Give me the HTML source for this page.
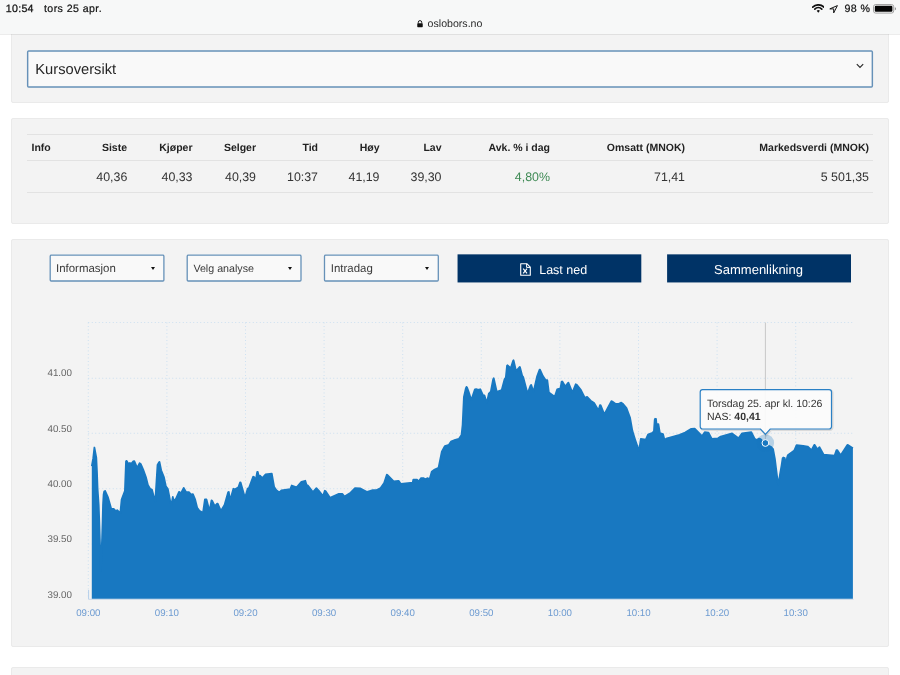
<!DOCTYPE html>
<html lang="no">
<head>
<meta charset="utf-8">
<title>oslobors.no</title>
<style>
*{box-sizing:border-box;margin:0;padding:0}
html,body{width:900px;height:675px;overflow:hidden;background:#fff}
body{position:relative;will-change:transform;text-rendering:geometricPrecision;font-family:"Liberation Sans",sans-serif;color:#333}
.abs{position:absolute}
.card{position:absolute;left:11px;width:878px;background:#f3f3f3;border:1px solid #eaeaea;border-radius:2px}
#status{position:absolute;left:0;top:0;width:900px;height:35px;background:#f7f8f8;background-clip:padding-box;border-bottom:1px solid rgba(0,0,0,0.075);z-index:5}
#status span{position:absolute;color:#111;white-space:nowrap}
.sel{position:absolute;background:#f9f9f9;border:1px solid transparent}
.sel span{position:absolute;white-space:nowrap;color:#3a3a3a}
.tri{position:absolute;width:0;height:0;border-left:2.7px solid transparent;border-right:2.7px solid transparent;border-top:3.1px solid #111}
.btn{position:absolute;top:254px;height:28.3px;color:#fff}
.btn span{position:absolute;white-space:nowrap}
.th{position:absolute;font-weight:bold;font-size:10.5px;color:#222;white-space:nowrap;top:142.2px;line-height:12px}
.td{position:absolute;font-size:12.4px;color:#333;white-space:nowrap;top:169.5px;line-height:14px}
.r{text-align:right}
.hl{position:absolute;left:27px;width:846px;height:1px;background:#e2e2e2}
</style>
</head>
<body>

<!-- iOS status / URL bar -->
<div id="status">
  <span style="left:5.8px;top:2.9px;font-size:10.6px;line-height:13px;letter-spacing:.3px;-webkit-text-stroke:.25px #111">10:54</span>
  <span style="left:44px;top:2.9px;font-size:10.6px;line-height:13px;letter-spacing:.42px;-webkit-text-stroke:.2px #111">tors 25 apr.</span>
  <svg class="abs" style="left:416.5px;top:20.2px" width="6" height="7.9" viewBox="0 0 7 9"><path d="M1.5 4V2.6a2 2 0 0 1 4 0V4" fill="none" stroke="#111" stroke-width="1.1"/><rect x="0.3" y="3.8" width="6.4" height="4.6" rx="0.8" fill="#111"/></svg>
  <span style="left:427.6px;top:18px;font-size:10.6px;line-height:12px;color:#2a2a2a">oslobors.no</span>
  <!-- wifi -->
  <svg class="abs" style="left:811.6px;top:4.2px" width="12.6" height="9" viewBox="0 0 14 10"><path d="M0.8 3.4a9 9 0 0 1 12.4 0" fill="none" stroke="#111" stroke-width="1.9" stroke-linecap="round"/><path d="M3.1 5.7a5.6 5.6 0 0 1 7.8 0" fill="none" stroke="#111" stroke-width="1.9" stroke-linecap="round"/><path d="M5.2 7.6a2.6 2.6 0 0 1 3.6 0L7 9.6z" fill="#111"/></svg>
  <!-- location arrow -->
  <svg class="abs" style="left:828.8px;top:5px" width="9" height="9" viewBox="0 0 9 9"><path d="M8.4 0.6L0.8 3.9h3.9v4z" fill="none" stroke="#111" stroke-width="1" stroke-linejoin="round"/></svg>
  <span style="left:844.5px;top:3.2px;font-size:10.7px;line-height:13px;letter-spacing:.4px;-webkit-text-stroke:.2px #111">98 %</span>
  <!-- battery -->
  <svg class="abs" style="left:873px;top:4px" width="24" height="10" viewBox="0 0 24 10"><rect x="0.5" y="0.5" width="20.2" height="8.6" rx="2.2" fill="none" stroke="#9a9a9a" stroke-width="0.9"/><rect x="1.8" y="1.8" width="17.6" height="6" rx="1.1" fill="#050505"/><path d="M21.9 3.3a1.6 1.6 0 0 1 0 3z" fill="#888"/></svg>
</div>

<!-- card 1 : Kursoversikt select -->
<div class="card" style="top:20px;height:83px"></div>
<div class="sel" style="left:27px;top:50.3px;width:846px;height:37.2px">
  <span style="left:7.3px;top:10.8px;font-size:14.7px;line-height:17px;color:#262626">Kursoversikt</span>
  <svg class="abs" style="left:828px;top:11.3px" width="8" height="6" viewBox="0 0 8 6"><path d="M0.8 1.1L4 4.4L7.2 1.1" fill="none" stroke="#2b2b2b" stroke-width="1.15"/></svg>
</div>

<!-- card 2 : quote table -->
<div class="card" style="top:118px;height:106px"></div>
<div class="hl" style="top:134px"></div>
<div class="hl" style="top:159.6px"></div>
<div class="hl" style="top:191.5px"></div>
<div class="th" style="left:31.5px">Info</div>
<div class="th r" style="right:773px">Siste</div>
<div class="th r" style="right:707.5px">Kjøper</div>
<div class="th r" style="right:644px">Selger</div>
<div class="th r" style="right:582px">Tid</div>
<div class="th r" style="right:520.5px">Høy</div>
<div class="th r" style="right:458.5px">Lav</div>
<div class="th r" style="right:350px">Avk. % i dag</div>
<div class="th r" style="right:215px">Omsatt (MNOK)</div>
<div class="th r" style="right:31px">Markedsverdi (MNOK)</div>
<div class="td r" style="right:772.7px">40,36</div>
<div class="td r" style="right:707.5px">40,33</div>
<div class="td r" style="right:644px">40,39</div>
<div class="td r" style="right:582px">10:37</div>
<div class="td r" style="right:520.5px">41,19</div>
<div class="td r" style="right:458.5px">39,30</div>
<div class="td r" style="right:350px;color:#3f8a55">4,80%</div>
<div class="td r" style="right:215px">71,41</div>
<div class="td r" style="right:31px">5 501,35</div>

<!-- card 3 : chart -->
<div class="card" style="top:239px;height:407.5px"></div>
<div class="sel" style="left:49.5px;top:254.3px;width:114.8px;height:27.2px"><span style="left:5.5px;top:8.2px;font-size:11.45px;line-height:13px">Informasjon</span><i class="tri" style="left:100.4px;top:11.6px"></i></div>
<div class="sel" style="left:186.7px;top:254.3px;width:114.8px;height:27.2px"><span style="left:5.7px;top:8.2px;font-size:10.7px;line-height:13px">Velg analyse</span><i class="tri" style="left:100.4px;top:11.6px"></i></div>
<div class="sel" style="left:324px;top:254.3px;width:114.8px;height:27.2px"><span style="left:5.8px;top:8.2px;font-size:11.45px;line-height:13px">Intradag</span><i class="tri" style="left:100.4px;top:11.6px"></i></div>
<svg class="abs" style="left:0;top:250px" width="900" height="40" viewBox="0 250 900 40"><rect x="457.55" y="254.35" width="183.75" height="28.1" fill="#003366"/><rect x="667.1" y="254.35" width="183.9" height="28.1" fill="#003366"/></svg>
<div class="btn" style="left:457px;width:184.3px">
  <svg class="abs" style="left:63px;top:8.7px" width="11" height="13" viewBox="0 0 11 13"><path d="M0.7 0.7h6.1l3.5 3.5v8.1H0.7z" fill="none" stroke="#fff" stroke-width="1.1" stroke-linejoin="round"/><path d="M6.6 0.9v3.5h3.5" fill="none" stroke="#fff" stroke-width="1"/><path d="M3.2 5.6l3.8 4.8M7 5.6l-3.8 4.8" stroke="#fff" stroke-width="1.15" fill="none"/></svg>
  <span style="left:82.2px;top:9px;font-size:12.5px;line-height:15px">Last ned</span>
</div>
<div class="btn" style="left:667px;width:184px">
  <span style="left:47.1px;top:8px;font-size:13px;line-height:15px">Sammenlikning</span>
</div>

<svg class="abs" style="left:0;top:300px" width="900" height="340" viewBox="0 300 900 340" font-family="Liberation Sans, sans-serif" text-rendering="geometricPrecision">
  <g stroke="#c3dbf0" stroke-width="0.9" stroke-dasharray="0.9 2.6" fill="none">
    <path d="M88.3 322.5H852.5M88.3 378.3H852.5M88.3 433.3H852.5M88.3 488.7H852.5M88.3 544.1H852.5"/>
    <path d="M88.3 322.5V599M166.9 322.5V599M245.5 322.5V599M324.1 322.5V599M402.7 322.5V599M481.3 322.5V599M559.9 322.5V599M638.5 322.5V599M717.1 322.5V599M795.7 322.5V599"/>
  </g>
  <path d="M88.3 599.3H853.5" stroke="#c6d6e8" stroke-width="1" fill="none"/>
  <path d="M88.6 590V599" stroke="#b5cfea" stroke-width="1" fill="none"/>
  <path fill="#1878c1" d="M91.8 598.8 L91.8 466.15 L93.2 458.14 L94.4 447.50 L94.5 447.96 L96.3 457.55 L97.0 472.35 L97.6 488.85 L98.7 504.85 L99.3 521.45 L99.8 537.85 L100.9 570.85 L102.1 537.85 L102.6 521.45 L103.0 504.85 L103.6 494.35 L104.2 491.55 L105.1 490.85 L107.9 497.02 L111.3 508.88 L113.7 508.81 L115.8 511.09 L117.2 510.17 L120.3 513.09 L121.6 499.50 L124.9 490.88 L126.0 461.21 L126.7 460.84 L128.4 463.86 L129.9 462.88 L131.2 463.88 L133.1 461.47 L134.3 461.17 L137.2 467.96 L139.6 463.14 L140.7 463.91 L143.2 469.63 L145.9 476.96 L147.9 485.04 L150.1 488.63 L152.0 489.82 L155.2 502.09 L157.5 464.96 L159.1 462.06 L159.5 461.99 L161.2 470.26 L163.9 476.96 L165.9 486.37 L167.9 489.06 L171.2 506.20 L172.8 496.88 L173.7 500.87 L176.0 498.52 L179.0 491.83 L181.0 493.15 L183.7 487.88 L186.2 492.18 L188.9 492.10 L191.0 494.67 L192.9 494.08 L195.2 499.59 L197.2 507.68 L199.4 510.67 L203.0 512.69 L204.9 499.37 L206.5 499.40 L209.5 511.02 L211.5 500.35 L212.1 500.69 L214.8 506.18 L217.2 503.55 L217.7 503.68 L220.9 510.86 L224.5 505.07 L228.2 492.01 L228.8 491.97 L230.0 500.50 L233.4 488.76 L235.2 489.33 L238.4 487.29 L240.1 482.38 L240.7 482.63 L245.0 497.81 L247.7 488.56 L249.0 487.92 L253.1 476.72 L253.9 476.76 L255.7 480.12 L257.2 471.98 L257.8 472.00 L258.6 475.58 L260.0 475.51 L262.3 477.98 L265.4 474.49 L271.8 473.71 L274.2 487.04 L276.4 490.33 L279.4 492.44 L281.4 490.39 L290.3 489.10 L291.7 485.50 L296.6 487.31 L301.4 481.76 L305.3 480.77 L306.7 485.58 L307.9 485.49 L312.9 492.02 L316.4 488.18 L318.7 490.60 L323.0 496.04 L324.8 490.77 L325.5 491.03 L330.0 497.80 L338.9 493.86 L342.3 493.80 L344.5 496.44 L350.6 492.69 L355.0 488.12 L360.5 488.45 L367.2 491.95 L372.8 490.17 L376.2 490.18 L380.6 487.99 L384.1 483.11 L386.8 474.72 L387.3 474.81 L393.7 481.31 L398.6 480.80 L400.9 483.93 L412.7 482.50 L413.3 479.68 L417.0 479.63 L418.8 481.28 L421.1 478.09 L423.7 478.11 L424.8 479.35 L427.3 478.18 L429.6 479.18 L431.7 471.79 L434.7 469.46 L438.5 467.94 L441.8 451.60 L444.9 445.98 L448.9 444.74 L450.9 441.68 L455.3 439.84 L458.8 438.97 L461.5 435.01 L462.6 424.77 L463.9 396.82 L465.8 388.34 L466.5 386.85 L467.0 387.29 L468.6 391.59 L471.3 400.09 L474.9 389.36 L476.2 389.18 L478.3 389.92 L480.2 389.20 L483.2 395.58 L484.5 395.41 L486.8 402.93 L488.8 393.72 L490.8 391.73 L493.1 379.37 L493.7 378.18 L493.9 379.06 L496.8 391.89 L501.7 389.96 L504.5 379.39 L505.8 377.64 L507.0 365.76 L507.6 365.28 L510.7 368.25 L513.0 360.90 L513.5 360.16 L513.9 361.60 L516.1 371.09 L519.8 366.88 L520.0 367.20 L522.2 375.68 L523.2 377.07 L527.6 393.61 L530.4 385.81 L531.2 384.87 L531.5 385.71 L533.5 392.01 L537.1 376.26 L539.5 369.73 L540.1 369.74 L542.9 376.04 L545.4 379.75 L547.3 380.17 L548.9 392.49 L554.7 396.70 L557.2 389.32 L560.5 388.26 L561.6 381.63 L562.3 381.50 L565.3 386.54 L568.1 382.79 L568.5 382.73 L572.4 392.60 L575.7 384.20 L576.8 384.73 L580.6 389.48 L584.9 397.78 L587.1 396.86 L590.7 400.68 L594.1 402.91 L598.5 410.41 L600.0 405.07 L600.7 405.37 L604.3 414.34 L611.4 401.10 L612.3 401.50 L615.7 403.88 L618.9 403.88 L621.3 402.58 L622.7 403.66 L626.5 408.14 L630.1 417.90 L632.4 430.85 L635.1 439.45 L636.9 444.85 L638.6 450.85 L640.0 444.35 L640.8 438.95 L645.8 439.55 L648.0 434.55 L652.4 432.75 L653.9 431.45 L654.7 419.85 L655.1 418.75 L656.0 418.85 L656.5 424.25 L658.4 424.15 L659.9 433.15 L663.0 434.05 L664.8 441.05 L666.2 438.55 L679.6 434.83 L685.1 432.49 L691.3 428.84 L694.7 428.53 L702.1 436.08 L704.7 432.11 L708.5 432.72 L711.8 438.94 L718.0 438.25 L720.7 436.50 L732.1 433.46 L738.5 438.22 L742.1 433.36 L751.3 432.08 L754.6 438.60 L756.7 440.05 L759.0 438.57 L760.6 439.05 L764.8 443.70 L771.3 447.15 L773.1 449.05 L774.9 458.85 L776.2 469.45 L778.2 485.05 L780.2 473.05 L781.6 465.05 L782.6 458.35 L783.3 457.45 L784.8 458.05 L786.0 466.35 L787.0 457.85 L787.8 455.15 L794.3 450.47 L796.6 445.16 L803.2 445.87 L807.6 446.50 L811.5 450.09 L814.3 444.82 L814.8 445.10 L817.4 449.30 L819.5 447.17 L823.5 454.53 L834.6 455.64 L836.5 450.02 L837.2 450.08 L840.7 455.27 L847.2 445.10 L847.9 444.87 L852.9 448.15 L852.9 598.8 Z"/>
  <path fill="none" stroke="#1878c1" stroke-width="1.76" stroke-linejoin="round" stroke-linecap="butt" d="M91.8 466.15 L93.2 458.14 L94.4 447.50 L94.5 447.96 L96.3 457.55 L97.0 472.35 L97.6 488.85 L98.7 504.85 L99.3 521.45 L99.8 537.85 L100.9 570.85 L102.1 537.85 L102.6 521.45 L103.0 504.85 L103.6 494.35 L104.2 491.55 L105.1 490.85 L107.9 497.02 L111.3 508.88 L113.7 508.81 L115.8 511.09 L117.2 510.17 L120.3 513.09 L121.6 499.50 L124.9 490.88 L126.0 461.21 L126.7 460.84 L128.4 463.86 L129.9 462.88 L131.2 463.88 L133.1 461.47 L134.3 461.17 L137.2 467.96 L139.6 463.14 L140.7 463.91 L143.2 469.63 L145.9 476.96 L147.9 485.04 L150.1 488.63 L152.0 489.82 L155.2 502.09 L157.5 464.96 L159.1 462.06 L159.5 461.99 L161.2 470.26 L163.9 476.96 L165.9 486.37 L167.9 489.06 L171.2 506.20 L172.8 496.88 L173.7 500.87 L176.0 498.52 L179.0 491.83 L181.0 493.15 L183.7 487.88 L186.2 492.18 L188.9 492.10 L191.0 494.67 L192.9 494.08 L195.2 499.59 L197.2 507.68 L199.4 510.67 L203.0 512.69 L204.9 499.37 L206.5 499.40 L209.5 511.02 L211.5 500.35 L212.1 500.69 L214.8 506.18 L217.2 503.55 L217.7 503.68 L220.9 510.86 L224.5 505.07 L228.2 492.01 L228.8 491.97 L230.0 500.50 L233.4 488.76 L235.2 489.33 L238.4 487.29 L240.1 482.38 L240.7 482.63 L245.0 497.81 L247.7 488.56 L249.0 487.92 L253.1 476.72 L253.9 476.76 L255.7 480.12 L257.2 471.98 L257.8 472.00 L258.6 475.58 L260.0 475.51 L262.3 477.98 L265.4 474.49 L271.8 473.71 L274.2 487.04 L276.4 490.33 L279.4 492.44 L281.4 490.39 L290.3 489.10 L291.7 485.50 L296.6 487.31 L301.4 481.76 L305.3 480.77 L306.7 485.58 L307.9 485.49 L312.9 492.02 L316.4 488.18 L318.7 490.60 L323.0 496.04 L324.8 490.77 L325.5 491.03 L330.0 497.80 L338.9 493.86 L342.3 493.80 L344.5 496.44 L350.6 492.69 L355.0 488.12 L360.5 488.45 L367.2 491.95 L372.8 490.17 L376.2 490.18 L380.6 487.99 L384.1 483.11 L386.8 474.72 L387.3 474.81 L393.7 481.31 L398.6 480.80 L400.9 483.93 L412.7 482.50 L413.3 479.68 L417.0 479.63 L418.8 481.28 L421.1 478.09 L423.7 478.11 L424.8 479.35 L427.3 478.18 L429.6 479.18 L431.7 471.79 L434.7 469.46 L438.5 467.94 L441.8 451.60 L444.9 445.98 L448.9 444.74 L450.9 441.68 L455.3 439.84 L458.8 438.97 L461.5 435.01 L462.6 424.77 L463.9 396.82 L465.8 388.34 L466.5 386.85 L467.0 387.29 L468.6 391.59 L471.3 400.09 L474.9 389.36 L476.2 389.18 L478.3 389.92 L480.2 389.20 L483.2 395.58 L484.5 395.41 L486.8 402.93 L488.8 393.72 L490.8 391.73 L493.1 379.37 L493.7 378.18 L493.9 379.06 L496.8 391.89 L501.7 389.96 L504.5 379.39 L505.8 377.64 L507.0 365.76 L507.6 365.28 L510.7 368.25 L513.0 360.90 L513.5 360.16 L513.9 361.60 L516.1 371.09 L519.8 366.88 L520.0 367.20 L522.2 375.68 L523.2 377.07 L527.6 393.61 L530.4 385.81 L531.2 384.87 L531.5 385.71 L533.5 392.01 L537.1 376.26 L539.5 369.73 L540.1 369.74 L542.9 376.04 L545.4 379.75 L547.3 380.17 L548.9 392.49 L554.7 396.70 L557.2 389.32 L560.5 388.26 L561.6 381.63 L562.3 381.50 L565.3 386.54 L568.1 382.79 L568.5 382.73 L572.4 392.60 L575.7 384.20 L576.8 384.73 L580.6 389.48 L584.9 397.78 L587.1 396.86 L590.7 400.68 L594.1 402.91 L598.5 410.41 L600.0 405.07 L600.7 405.37 L604.3 414.34 L611.4 401.10 L612.3 401.50 L615.7 403.88 L618.9 403.88 L621.3 402.58 L622.7 403.66 L626.5 408.14 L630.1 417.90 L632.4 430.85 L635.1 439.45 L636.9 444.85 L638.6 450.85 L640.0 444.35 L640.8 438.95 L645.8 439.55 L648.0 434.55 L652.4 432.75 L653.9 431.45 L654.7 419.85 L655.1 418.75 L656.0 418.85 L656.5 424.25 L658.4 424.15 L659.9 433.15 L663.0 434.05 L664.8 441.05 L666.2 438.55 L679.6 434.83 L685.1 432.49 L691.3 428.84 L694.7 428.53 L702.1 436.08 L704.7 432.11 L708.5 432.72 L711.8 438.94 L718.0 438.25 L720.7 436.50 L732.1 433.46 L738.5 438.22 L742.1 433.36 L751.3 432.08 L754.6 438.60 L756.7 440.05 L759.0 438.57 L760.6 439.05 L764.8 443.70 L771.3 447.15 L773.1 449.05 L774.9 458.85 L776.2 469.45 L778.2 485.05 L780.2 473.05 L781.6 465.05 L782.6 458.35 L783.3 457.45 L784.8 458.05 L786.0 466.35 L787.0 457.85 L787.8 455.15 L794.3 450.47 L796.6 445.16 L803.2 445.87 L807.6 446.50 L811.5 450.09 L814.3 444.82 L814.8 445.10 L817.4 449.30 L819.5 447.17 L823.5 454.53 L834.6 455.64 L836.5 450.02 L837.2 450.08 L840.7 455.27 L847.2 445.10 L847.9 444.87 L852.9 448.15"/>
  <path d="M765.4 322.5V443" stroke="#c8c8c8" stroke-width="1" fill="none"/>
  <g font-size="9.8" fill="#666" text-anchor="end">
    <text x="72" y="376.4">41.00</text>
    <text x="72" y="431.6">40.50</text>
    <text x="72" y="487">40.00</text>
    <text x="72" y="542.4">39.50</text>
    <text x="72" y="597.8">39.00</text>
  </g>
  <g font-size="9.7" fill="#6d9bd1" text-anchor="middle">
    <text x="88.3" y="616">09:00</text>
    <text x="166.9" y="616">09:10</text>
    <text x="245.5" y="616">09:20</text>
    <text x="324.1" y="616">09:30</text>
    <text x="402.7" y="616">09:40</text>
    <text x="481.3" y="616">09:50</text>
    <text x="559.9" y="616">10:00</text>
    <text x="638.5" y="616">10:10</text>
    <text x="717.1" y="616">10:20</text>
    <text x="795.7" y="616">10:30</text>
  </g>
  <!-- hover marker -->
  <circle cx="765.4" cy="443" r="8.7" fill="#1878c1" fill-opacity="0.27"/>
  <circle cx="765.4" cy="443" r="3.4" fill="#1878c1" stroke="#fff" stroke-width="1"/>
  <!-- tooltip -->
  <path d="M702.6 389.7H829.1a2.4 2.4 0 0 1 2.4 2.4V426.6a2.4 2.4 0 0 1 -2.4 2.4H770.2L765.4 434.3L760.5 429H702.6a2.4 2.4 0 0 1 -2.4 -2.4V392.1a2.4 2.4 0 0 1 2.4 -2.4z" fill="none" stroke="#000" stroke-opacity="0.10" stroke-width="2.2" transform="translate(0.9,0.9)"/>
  <path d="M702.6 389.7H829.1a2.4 2.4 0 0 1 2.4 2.4V426.6a2.4 2.4 0 0 1 -2.4 2.4H770.2L765.4 434.3L760.5 429H702.6a2.4 2.4 0 0 1 -2.4 -2.4V392.1a2.4 2.4 0 0 1 2.4 -2.4z" fill="#fbfbfb" fill-opacity="0.94" stroke="#2a80c5" stroke-width="1.2"/>
  <text x="706.9" y="407" font-size="10.5" fill="#333">Torsdag 25. apr kl. 10:26</text>
  <text x="706.9" y="419.5" font-size="10.5" fill="#333">NAS: <tspan font-weight="bold">40,41</tspan></text>
</svg>

<svg class="abs" style="left:0;top:0;z-index:3;pointer-events:none" width="900" height="300" viewBox="0 0 900 300" fill="none" stroke="#6691b8" stroke-width="1.45">
  <rect x="27.65" y="50.9" width="844.7" height="36" rx="1"/>
  <rect x="50.2" y="255.2" width="113.7" height="25.8" rx="1" stroke-width="1.3"/>
  <rect x="187.2" y="255.2" width="113.8" height="25.8" rx="1" stroke-width="1.3"/>
  <rect x="324.5" y="255.2" width="113.8" height="25.8" rx="1" stroke-width="1.3"/>
</svg>
<!-- card 4 (cut off) -->
<div class="card" style="top:667px;height:40px"></div>
</body>
</html>
